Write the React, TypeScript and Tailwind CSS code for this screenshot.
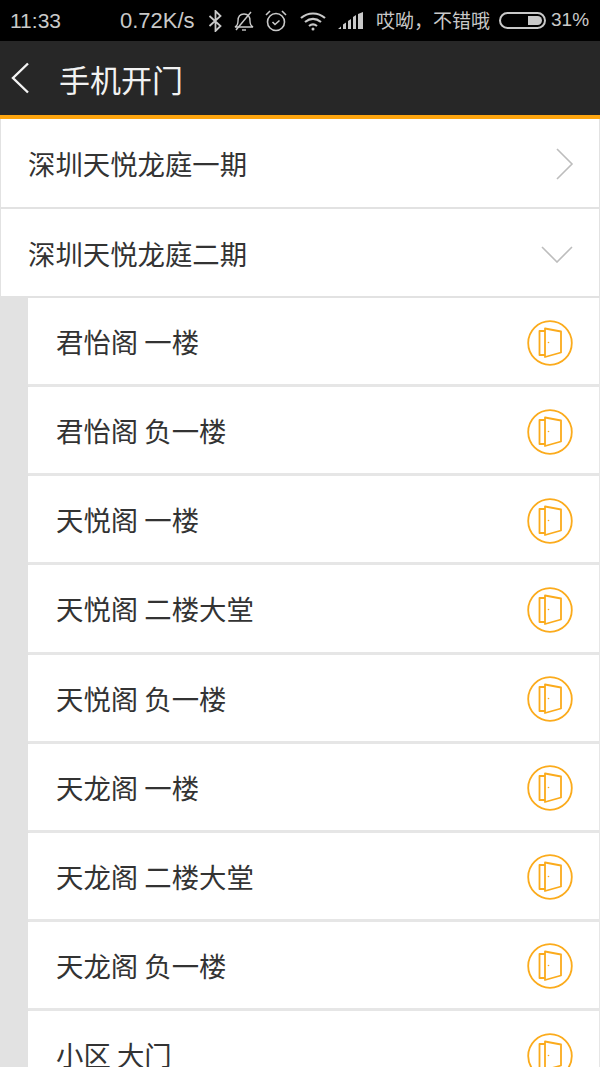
import React from 'react';

const doors = [
  '君怡阁 一楼',
  '君怡阁 负一楼',
  '天悦阁 一楼',
  '天悦阁 二楼大堂',
  '天悦阁 负一楼',
  '天龙阁 一楼',
  '天龙阁 二楼大堂',
  '天龙阁 负一楼',
  '小区 大门',
];

const cjk = "font-['Noto_Sans_CJK_SC','Noto_Sans',sans-serif]";

const DoorIcon = () => (
  <svg width="46" height="46" viewBox="0 0 46 46" fill="none" stroke="#fbab1c" strokeWidth="1.8" strokeLinejoin="round" className="mt-[3px]">
    <circle cx="23" cy="23" r="21.8" />
    <path d="M18 11h-5.500v24H18" />
    <path d="M18 8.500l16 3v21l-16 4.500z" />
    <circle cx="21.500" cy="22.500" r="0.800" fill="#fbab1c" stroke="none" />
  </svg>
);

const StatusBar = () => (
  <div className="h-[41px] bg-black flex items-center text-[#c9c9c9] pl-[10px] font-['Liberation_Sans',sans-serif] whitespace-nowrap">
    <span className="text-[21px] w-[110px]">11:33</span>
    <span className="text-[22px] w-[88px]">0.72K/s</span>
    <svg width="14" height="22" viewBox="0 0 14 22" fill="none" stroke="#c9c9c9" strokeWidth="1.800">
      <path d="M1.500 6l11 10-5 5V1l5 5-11 10" />
    </svg>
    <svg width="20" height="22" viewBox="0 0 20 22" fill="none" stroke="#c9c9c9" strokeWidth="1.400" className="ml-[12px]">
      <path d="M1 17c2-1 3-3 3-6s1-7 6-7 6 4 6 7 1 5 3 6z" />
      <path d="M8 20h4" />
      <path d="M2 20L17 2" />
    </svg>
    <svg width="24" height="24" viewBox="0 0 24 24" fill="none" stroke="#c9c9c9" strokeWidth="1.600" className="ml-[10px]">
      <circle cx="12" cy="13" r="8.500" />
      <path d="M8.500 13l2.500 2.500 4.500-4" />
      <path d="M2 6l4-4M22 6l-4-4" />
    </svg>
    <svg width="28" height="22" viewBox="0 0 28 22" fill="none" stroke="#c9c9c9" strokeWidth="2.200" className="ml-[11px]">
      <path d="M2 8c7-6 17-6 24 0" />
      <path d="M6 12c5-4 11-4 16 0" />
      <path d="M10 16c2.500-2 5.500-2 8 0" />
      <circle cx="14" cy="19" r="1.500" fill="#c9c9c9" stroke="none" />
    </svg>
    <svg width="26" height="18" viewBox="0 0 26 18" fill="#c9c9c9" className="ml-[11px]">
      <path d="M0 17l3-2.500V17zM5 12.500l3-2V17H5zM10 9l3-2v10h-3zM15 5l3-2v14h-3zM20 2l5-2v17h-5z" />
    </svg>
    <span className={`text-[19px] w-[114px] ml-[12px] ${cjk}`}>哎呦，不错哦</span>
    <div className="ml-[9px] w-[47px] h-[17px] rounded-full border-2 border-[#c9c9c9] flex justify-end p-[2px]">
      <div className="w-[14px] h-full bg-[#c9c9c9] rounded-r-full" />
    </div>
    <span className="text-[19px] ml-[5px]">31%</span>
  </div>
);

const App = () => {
  return (
    <div className="w-[600px] h-[1067px] overflow-hidden bg-[#e2e2e2]">
      <StatusBar />
      <div className="h-[74px] bg-[#272727] flex items-center pl-[10px]">
        <svg width="20" height="32" viewBox="0 0 20 32" fill="none" stroke="#f4f4f4" strokeWidth="2.400">
          <path d="M18 1.500L3 16l15 14.500" />
        </svg>
        <span className={`ml-[29px] text-[31px] leading-none text-[#f2f2f2] ${cjk}`}>手机开门</span>
      </div>
      <div className="h-[4px] bg-[#fda50f]" />

      <div className={`h-[90px] pt-[2px] bg-white border-b-2 border-r border-l border-[#e2e2e2] flex items-center justify-between pl-[27px] pr-[25px] text-[27.4px] text-[#333333] ${cjk}`}>
        <span>深圳天悦龙庭一期</span>
        <svg width="19" height="32" viewBox="0 0 19 32" fill="none" stroke="#bdbdbd" strokeWidth="1.600">
          <path d="M2 1l15 15L2 31" />
        </svg>
      </div>
      <div className={`h-[89px] pt-[2px] bg-white border-b-2 border-r border-l border-[#e2e2e2] flex items-center justify-between pl-[27px] pr-[26px] text-[27.4px] text-[#333333] ${cjk}`}>
        <span>深圳天悦龙庭二期</span>
        <svg width="32" height="18" viewBox="0 0 32 18" fill="none" stroke="#bdbdbd" strokeWidth="1.600">
          <path d="M1 2l15 15L31 2" />
        </svg>
      </div>

      <div className="pl-[28px] flex flex-col">
        {doors.map((name) => (
          <div
            key={name}
            className={`h-[89.125px] shrink-0 bg-white rounded-bl-[3px] border-b-[3px] border-r border-[#e6e6e6] flex items-center justify-between pl-[28px] pr-[26px] text-[27.4px] text-[#333333] ${cjk}`}
          >
            <span className="pt-[1px]">{name}</span>
            <DoorIcon />
          </div>
        ))}
      </div>
    </div>
  );
};

export default App;
